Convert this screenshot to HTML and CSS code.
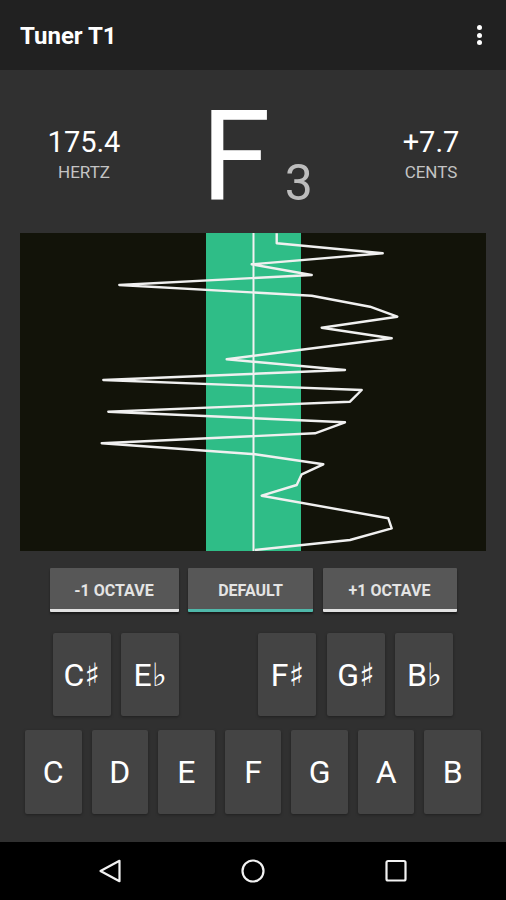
FILE: index.html
```html
<!DOCTYPE html>
<html lang="en">
<head>
<meta charset="utf-8">
<title>Tuner T1</title>
<link rel="stylesheet" href="styles.css">
</head>
<body>
<div class="app">
  <header class="appbar">
    <span class="title">Tuner T1</span>
    <span class="overflow"><i></i><i></i><i></i></span>
  </header>
  <main class="content">
    <section class="readout">
      <div class="stat">
        <div class="value">175.4</div>
        <div class="unit">HERTZ</div>
      </div>
      <div class="note">
        <span class="letter">F</span><span class="octave">3</span>
      </div>
      <div class="stat">
        <div class="value">+7.7</div>
        <div class="unit">CENTS</div>
      </div>
    </section>
    <div class="scope">
      <svg class="scope-svg" viewBox="0 0 467 318" width="467" height="318">
        <rect class="band" x="186" y="0" width="95" height="318"/>
        <rect class="center-line" x="232.5" y="0" width="2" height="318"/>
        <polyline class="trace" points="256.7,0.3 256.7,10.3 362.7,20.3 231.7,31.3 291.7,42 99.3,52 291.7,62.7 350,73.7 377.3,83.7 301.7,94.7 371.7,105.3 206.7,126.3 325,137 83.3,147 341.7,157 330,168.7 88.3,178.7 325,189.3 295,200.3 81.7,210.3 235,221.3 303.3,231.3 281.7,241.3 276.7,252 241.7,262.7 368.3,285.3 371.7,295.3 330,307 235,317"/>
      </svg>
    </div>
    <div class="octaves">
      <button class="oct oct-down">-1 OCTAVE</button>
      <button class="oct oct-default">DEFAULT</button>
      <button class="oct oct-up">+1 OCTAVE</button>
    </div>
    <div class="keys keys-accidental">
      <button class="key">C♯</button>
      <button class="key">E♭</button>
      <span class="key-gap"></span>
      <button class="key">F♯</button>
      <button class="key">G♯</button>
      <button class="key">B♭</button>
    </div>
    <div class="keys keys-natural">
      <button class="key">C</button>
      <button class="key">D</button>
      <button class="key">E</button>
      <button class="key">F</button>
      <button class="key">G</button>
      <button class="key">A</button>
      <button class="key">B</button>
    </div>
  </main>
  <nav class="navbar">
    <svg class="nav-icon" viewBox="0 0 24 24" width="24" height="24"><polygon points="2.5,12 21.5,1.8 21.5,22.2"/></svg>
    <svg class="nav-icon" viewBox="0 0 24 24" width="24" height="24"><circle cx="12" cy="12" r="10.5"/></svg>
    <svg class="nav-icon" viewBox="0 0 24 24" width="24" height="24"><rect x="2.5" y="2" width="19" height="19.5" rx="1.5"/></svg>
  </nav>
</div>
</body>
</html>
```
FILE: styles.css
```css
* { box-sizing: border-box; }

html, body {
  margin: 0;
  padding: 0;
  background: #303030;
  font-family: Roboto, "Noto Sans", "DejaVu Sans", sans-serif;
  color: #ffffff;
}

.app {
  width: 506px;
  height: 900px;
  display: flex;
  flex-direction: column;
  overflow: hidden;
}

.appbar {
  height: 70px;
  flex: none;
  background: #212121;
  display: flex;
  align-items: center;
  justify-content: space-between;
  padding: 2px 24px 0 20px;
}

.title {
  font-size: 24px;
  font-weight: 700;
  color: #ffffff;
}

.overflow {
  display: flex;
  flex-direction: column;
  gap: 2.5px;
  margin-top: -2px;
}

.overflow i {
  display: block;
  width: 5px;
  height: 5px;
  border-radius: 50%;
  background: #ffffff;
}

.content {
  flex: 1;
  display: flex;
  flex-direction: column;
}

.readout {
  height: 163px;
  display: grid;
  grid-template-columns: 168px 188px 150px;
}

.stat {
  padding-top: 55px;
  text-align: center;
}

.value {
  font-size: 29px;
  line-height: 34px;
  color: #ffffff;
}

.unit {
  margin-top: 3px;
  font-size: 17px;
  line-height: 20px;
  color: #c4c4c4;
}

.note {
  display: flex;
  align-items: baseline;
  padding-top: 24px;
  padding-left: 33px;
}

.letter {
  font-size: 126px;
  line-height: 126px;
  color: #ffffff;
}

.octave {
  font-size: 50px;
  line-height: 50px;
  margin-left: 14px;
  color: #bdbdbd;
}

.scope {
  margin: 0 20px;
  height: 318px;
  background: #121309;
}

.scope-svg { display: block; }

.band { fill: #2fbd87; }
.center-line { fill: #f2f2f2; }
.trace {
  fill: none;
  stroke: #f0f0f0;
  stroke-width: 2.4;
  stroke-linejoin: round;
}

.octaves {
  margin-top: 17px;
  display: flex;
  justify-content: center;
  gap: 9.5px;
}

.oct {
  height: 44px;
  border: none;
  border-bottom: 3px solid #e2e2e2;
  border-radius: 1px;
  background: #575757;
  color: #e4e4e4;
  font-family: Roboto, "Noto Sans", sans-serif;
  font-size: 16px;
  font-weight: 700;
  padding: 3px 0 0;
  box-shadow: 0 2px 2px rgba(0, 0, 0, 0.45);
}

.oct-down { width: 129px; }
.oct-default { width: 125px; border-bottom-color: #4fb8aa; }
.oct-up { width: 134px; }

.keys {
  display: grid;
  gap: 10px;
}

.keys-accidental {
  margin: 21px auto 0;
  width: 401px;
  grid-template-columns: repeat(6, 1fr);
  column-gap: 10.5px;
}

.keys-natural {
  margin-top: 14px;
  padding: 0 25px;
  grid-template-columns: repeat(7, 1fr);
}

.key {
  border: none;
  border-radius: 2px;
  background: #444444;
  color: #ffffff;
  font-family: Roboto, "DejaVu Sans", sans-serif;
  font-size: 32px;
  padding: 0;
  display: flex;
  align-items: center;
  justify-content: center;
  box-shadow: 0 1px 3px rgba(0, 0, 0, 0.35);
}

.keys-accidental .key { height: 83px; }
.keys-natural .key { height: 84px; }

.navbar {
  height: 58px;
  flex: none;
  background: #000000;
  display: flex;
  align-items: center;
  justify-content: center;
  gap: 119px;
}

.nav-icon {
  display: block;
  fill: none;
  stroke: #f2f2f2;
  stroke-width: 2.2;
  stroke-linejoin: round;
}
```
